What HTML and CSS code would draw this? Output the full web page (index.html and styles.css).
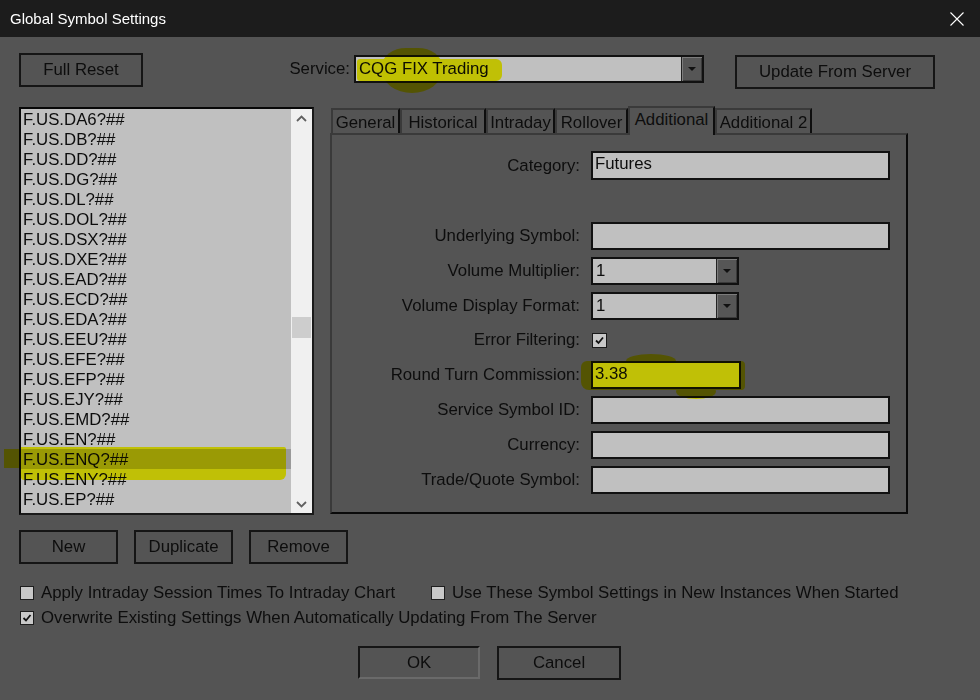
FILE: index.html
```html
<!DOCTYPE html>
<html>
<head>
<meta charset="utf-8">
<title>Global Symbol Settings</title>
<link rel="stylesheet" href="styles.css">
</head>
<body>
<div class="window">
  <div class="titlebar">
    <span class="title">Global Symbol Settings</span>
    <svg class="close" width="14" height="14" viewBox="0 0 14 14"><path d="M0.5 0.5 L13.5 13.5 M13.5 0.5 L0.5 13.5" stroke="#ffffff" stroke-width="1.1" fill="none"/></svg>
  </div>
  <div class="content">
    <div class="toprow">
      <div class="btn btn-reset">Full Reset</div>
      <div class="service-label">Service:</div>
      <div class="combo combo-service">
        <div class="combo-text">CQG FIX Trading</div>
        <div class="combo-btn"><span class="tri"></span></div>
      </div>
      <div class="btn btn-update">Update From Server</div>
    </div>

    <div class="mainrow">
      <div class="listbox">
        <div class="items">
          <div class="item">F.US.DA6?##</div>
          <div class="item">F.US.DB?##</div>
          <div class="item">F.US.DD?##</div>
          <div class="item">F.US.DG?##</div>
          <div class="item">F.US.DL?##</div>
          <div class="item">F.US.DOL?##</div>
          <div class="item">F.US.DSX?##</div>
          <div class="item">F.US.DXE?##</div>
          <div class="item">F.US.EAD?##</div>
          <div class="item">F.US.ECD?##</div>
          <div class="item">F.US.EDA?##</div>
          <div class="item">F.US.EEU?##</div>
          <div class="item">F.US.EFE?##</div>
          <div class="item">F.US.EFP?##</div>
          <div class="item">F.US.EJY?##</div>
          <div class="item">F.US.EMD?##</div>
          <div class="item">F.US.EN?##</div>
          <div class="item sel">F.US.ENQ?##</div>
          <div class="item">F.US.ENY?##</div>
          <div class="item">F.US.EP?##</div>
        </div>
        <div class="scroll">
          <div class="sarrow"><svg width="11" height="7" viewBox="0 0 11 7"><path d="M1 6 L5.5 1.5 L10 6" stroke="#606060" stroke-width="1.8" fill="none"/></svg></div>
          <div class="track"><div class="thumb"></div></div>
          <div class="sarrow"><svg width="11" height="7" viewBox="0 0 11 7"><path d="M1 1 L5.5 5.5 L10 1" stroke="#606060" stroke-width="1.8" fill="none"/></svg></div>
        </div>
      </div>

      <div class="tabs">
        <div class="tabstrip">
          <div class="tab t-general">General</div>
          <div class="tab t-hist">Historical</div>
          <div class="tab t-intra">Intraday</div>
          <div class="tab t-roll">Rollover</div>
          <div class="tab t-add active">Additional</div>
          <div class="tab t-add2">Additional 2</div>
        </div>
        <div class="panel">
          <div class="row row-cat">
            <div class="label">Category:</div>
            <div class="field">Futures</div>
          </div>
          <div class="rows">
            <div class="row">
              <div class="label">Underlying Symbol:</div>
              <div class="field"></div>
            </div>
            <div class="row">
              <div class="label">Volume Multiplier:</div>
              <div class="combo vcombo">
                <div class="combo-text">1</div>
                <div class="combo-btn"><span class="tri"></span></div>
              </div>
            </div>
            <div class="row">
              <div class="label">Volume Display Format:</div>
              <div class="combo vcombo">
                <div class="combo-text">1</div>
                <div class="combo-btn"><span class="tri"></span></div>
              </div>
            </div>
            <div class="row">
              <div class="label">Error Filtering:</div>
              <div class="check"><svg width="13" height="13" viewBox="0 0 13 13"><path d="M3 6.5 L5.5 9 L10 3.5" stroke="#111" stroke-width="1.8" fill="none"/></svg></div>
            </div>
            <div class="row">
              <div class="label">Round Turn Commission:</div>
              <div class="field short">3.38</div>
            </div>
            <div class="row">
              <div class="label">Service Symbol ID:</div>
              <div class="field"></div>
            </div>
            <div class="row">
              <div class="label">Currency:</div>
              <div class="field"></div>
            </div>
            <div class="row">
              <div class="label">Trade/Quote Symbol:</div>
              <div class="field"></div>
            </div>
          </div>
        </div>
      </div>
    </div>

    <div class="btnrow">
      <div class="btn btn-sm">New</div>
      <div class="btn btn-sm">Duplicate</div>
      <div class="btn btn-sm">Remove</div>
    </div>

    <div class="checks">
      <div class="crow">
        <div class="cb"></div>
        <span class="ctext1">Apply Intraday Session Times To Intraday Chart</span>
        <div class="cb"></div>
        <span>Use These Symbol Settings in New Instances When Started</span>
      </div>
      <div class="crow">
        <div class="cb"><svg width="12" height="12" viewBox="0 0 12 12"><path d="M2.5 6 L5 8.5 L9.5 3" stroke="#111" stroke-width="1.8" fill="none"/></svg></div>
        <span>Overwrite Existing Settings When Automatically Updating From The Server</span>
      </div>
    </div>

    <div class="okrow">
      <div class="btn btn-ok">OK</div>
      <div class="btn btn-cancel">Cancel</div>
    </div>
  </div>

  <div class="hl hl-svc"></div>
  <div class="hl hl-svc-smudge"></div>
  <div class="hl hl-list"></div>
  <div class="hl hl-list-left"></div>
  <div class="hl hl-rt"></div>
  <div class="hl hl-rt-top"></div>
  <div class="hl hl-rt-bottom"></div>
</div>
</body>
</html>
```

FILE: styles.css
```css
* { box-sizing: border-box; }

body {
  margin: 0;
  background: #545454;
  font-family: "Liberation Sans", Arial, sans-serif;
  font-size: 16.8px;
  color: #0d0d0d;
}

.window {
  position: relative;
  width: 980px;
  height: 700px;
  overflow: hidden;
  background: #545454;
  isolation: isolate;
}

.titlebar {
  height: 37px;
  background: #1c1c1c;
  color: #ffffff;
  display: flex;
  align-items: center;
  justify-content: space-between;
  padding: 0 16px 0 10px;
  font-size: 15px;
}

.close { display: block; }

.content { padding-left: 19px; }

.btn {
  background: #545454;
  border: 2px solid #151515;
  display: flex;
  align-items: center;
  justify-content: center;
  color: #0d0d0d;
  white-space: nowrap;
}

.toprow {
  display: flex;
  align-items: flex-start;
  margin-top: 16px;
}

.btn-reset { width: 124px; height: 34px; }

.service-label {
  width: 207px;
  text-align: right;
  margin-top: 2px;
  line-height: 28px;
}

.combo {
  height: 28px;
  border: 2px solid #111111;
  background: #c0c0c0;
  display: flex;
}

.combo-service {
  margin-left: 4px;
  margin-top: 2px;
  width: 350px;
}

.combo-text {
  flex: 1;
  padding-left: 3px;
  line-height: 24px;
}

.combo-btn {
  width: 21px;
  background: #565656;
  border-left: 1px solid #222222;
  box-shadow: inset 1px 1px 0 #7c7c7c, inset -1px -1px 0 #3a3a3a;
  display: flex;
  align-items: center;
  justify-content: center;
}

.tri {
  width: 0;
  height: 0;
  border-left: 4px solid transparent;
  border-right: 4px solid transparent;
  border-top: 4px solid #111111;
}

.btn-update {
  margin-left: 31px;
  margin-top: 2px;
  width: 200px;
  height: 34px;
}

.mainrow {
  display: flex;
  align-items: flex-start;
  margin-top: 18px;
}

.listbox {
  width: 295px;
  height: 408px;
  border: 2px solid;
  border-color: #080808 #1a1a1a #1a1a1a #080808;
  background: #c0c0c0;
  display: flex;
}

.items { flex: 1; }

.item {
  height: 20px;
  line-height: 21px;
  padding-left: 2px;
}

.item.sel { background: #9a9a9a; }

.scroll {
  width: 21px;
  background: #f0f0f0;
  display: flex;
  flex-direction: column;
}

.sarrow {
  height: 18px;
  display: flex;
  align-items: center;
  justify-content: center;
}

.track { flex: 1; }

.thumb {
  margin: 190px 1px 0 1px;
  height: 21px;
  background: #cdcdcd;
}

.tabs {
  margin-left: 16px;
  margin-top: -1px;
  width: 578px;
}

.tabstrip {
  display: flex;
  align-items: flex-end;
  height: 27px;
  padding-left: 1px;
}

.tab {
  height: 25px;
  border: 2px solid #3a3a3a;
  border-right-color: #0e0e0e;
  border-bottom: none;
  line-height: 25px;
  text-align: center;
  white-space: nowrap;
  background: #545454;
}

.t-general { width: 69px; }
.t-hist { width: 86px; }
.t-intra { width: 69px; }
.t-roll { width: 73px; }
.t-add { width: 87px; }
.t-add2 { width: 97px; }

.tab.active {
  height: 29px;
  margin-bottom: -2px;
  line-height: 24px;
  position: relative;
  z-index: 1;
}

.panel {
  height: 381px;
  border: 2px solid;
  border-color: #3a3a3a #0a0a0a #0a0a0a #3a3a3a;
  padding-top: 16px;
}

.row {
  display: flex;
  align-items: center;
  height: 28px;
}

.row-cat { height: 29px; }

.rows {
  display: flex;
  flex-direction: column;
  gap: 6.8px;
  margin-top: 42px;
}

.label {
  width: 248px;
  margin-right: 11px;
  text-align: right;
  white-space: nowrap;
}

.field {
  width: 299px;
  height: 28px;
  border: 2px solid #111111;
  background: #c0c0c0;
  padding-left: 2px;
  line-height: 22px;
}

.row-cat .field { height: 29px; }

.field.short { width: 150px; }

.vcombo { width: 148px; }

.check {
  width: 15px;
  height: 15px;
  margin-left: 1px;
  border: 1px solid #1a1a1a;
  background: #c8c8c8;
  display: flex;
  align-items: center;
  justify-content: center;
}

.btnrow {
  display: flex;
  gap: 16px;
  margin-top: 15px;
}

.btn-sm { width: 99px; height: 34px; }

.checks { margin-top: 16px; }

.crow {
  display: flex;
  align-items: center;
  height: 25px;
  white-space: nowrap;
}

.cb {
  width: 14px;
  height: 14px;
  margin-left: 1px;
  margin-right: 7px;
  border: 1px solid #1e1e1e;
  background: #c8c8c8;
  display: flex;
  align-items: center;
  justify-content: center;
}

.ctext1 { width: 389px; }

.okrow {
  display: flex;
  gap: 17px;
  margin-top: 16px;
  padding-left: 339px;
}

.btn-ok {
  width: 122px;
  height: 33px;
  border-color: #151515 #6a6a6a #6a6a6a #151515;
}

.btn-cancel { width: 124px; height: 34px; }

/* highlighter marks drawn over the dialog */
.hl {
  position: absolute;
  background: #ffff08;
  mix-blend-mode: multiply;
  pointer-events: none;
}

.hl-svc {
  left: 357px;
  top: 59px;
  width: 145px;
  height: 22px;
  border-radius: 3px 6px 6px 3px;
}

.hl-svc-smudge {
  left: 382px;
  top: 48px;
  width: 60px;
  height: 45px;
  border-radius: 40% 40% 50% 50%;
}

.hl-list {
  left: 21px;
  top: 447px;
  width: 265px;
  height: 33px;
  border-radius: 0 2px 6px 3px;
}

.hl-list-left {
  left: 4px;
  top: 449px;
  width: 18px;
  height: 19px;
}

.hl-rt {
  left: 581px;
  top: 361px;
  width: 164px;
  height: 29px;
  border-radius: 6px 4px 4px 8px;
}

.hl-rt-top {
  left: 626px;
  top: 354px;
  width: 50px;
  height: 14px;
  border-radius: 50%;
}

.hl-rt-bottom {
  left: 676px;
  top: 384px;
  width: 40px;
  height: 15px;
  border-radius: 50%;
}
```
